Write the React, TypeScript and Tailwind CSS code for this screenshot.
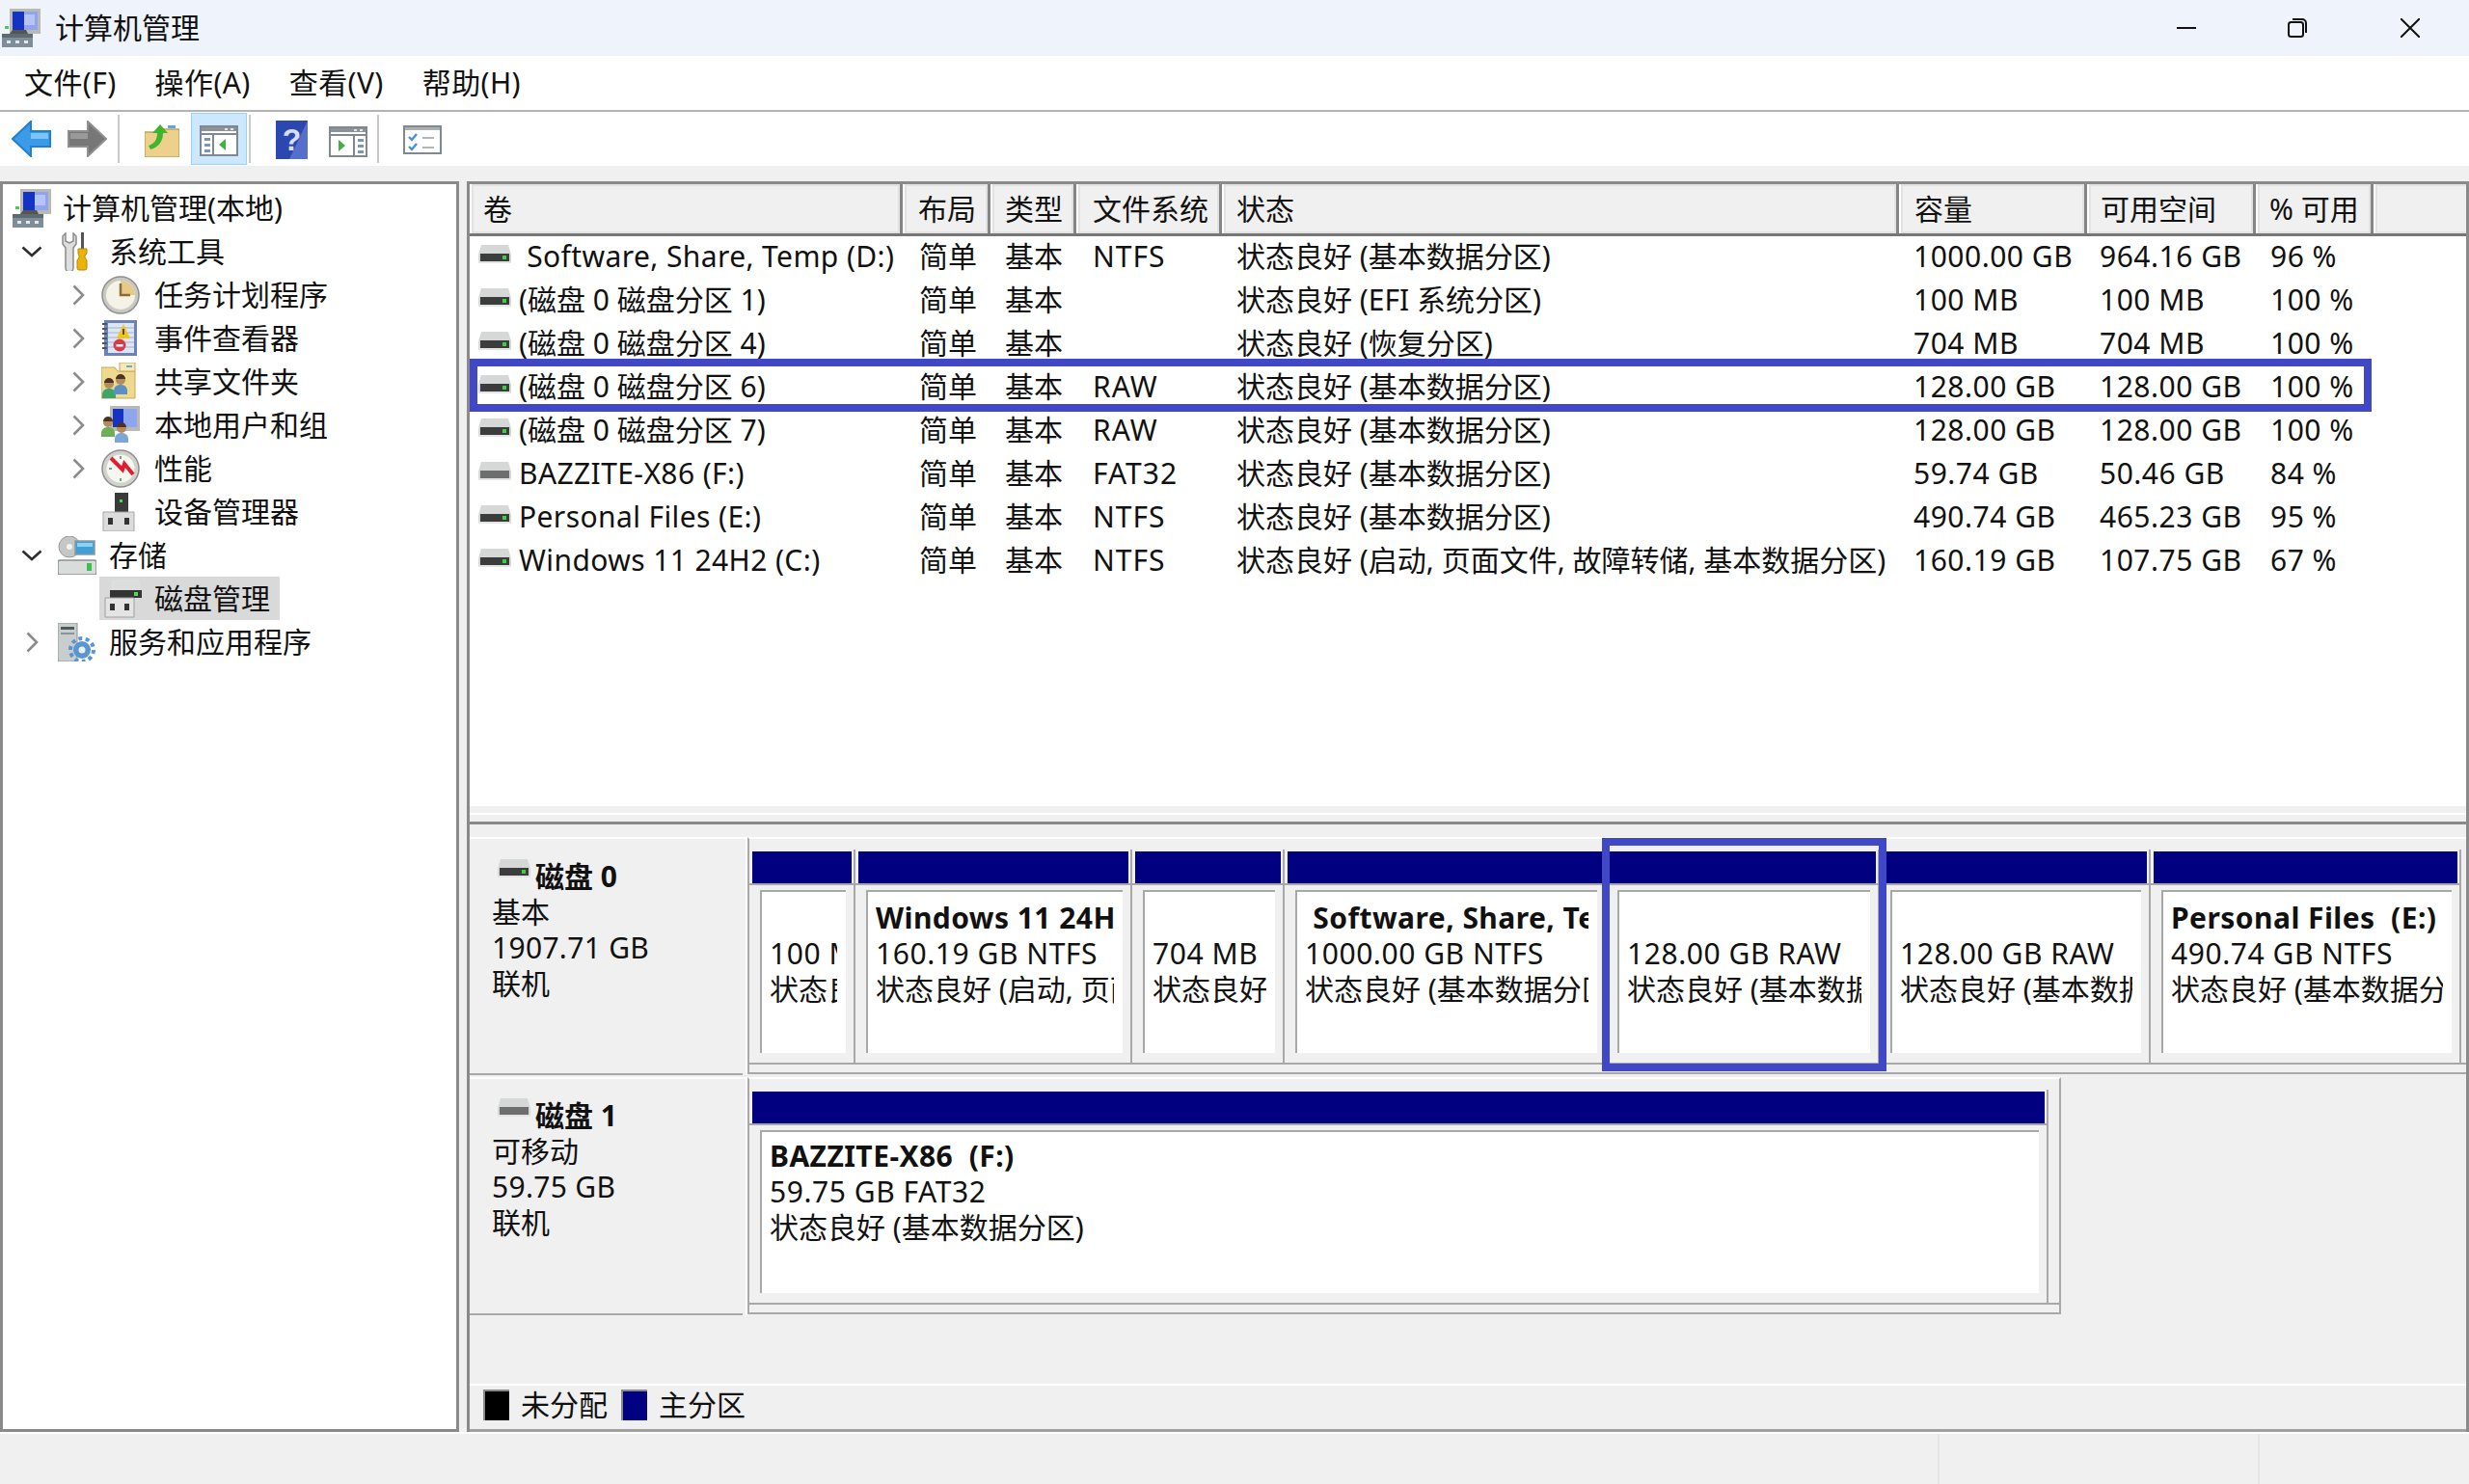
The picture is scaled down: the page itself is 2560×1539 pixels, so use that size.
import React from 'react';

const columns = [
  { title: '卷', w: 'w-[449px]', pl: 'pl-[12px]', cell: '' },
  { title: '布局', w: 'w-[91px]', pl: 'pl-[14px]', cell: 'pl-[17px]' },
  { title: '类型', w: 'w-[89px]', pl: 'pl-[13px]', cell: 'pl-[15px]' },
  { title: '文件系统', w: 'w-[151px]', pl: 'pl-[15px]', cell: 'pl-[17px] tracking-[1px]' },
  { title: '状态', w: 'w-[702px]', pl: 'pl-[13px]', cell: 'pl-[15px]' },
  { title: '容量', w: 'w-[195px]', pl: 'pl-[14px]', cell: 'pl-[15px] tracking-[0.5px]' },
  { title: '可用空间', w: 'w-[175px]', pl: 'pl-[12px]', cell: 'pl-[13px] tracking-[0.5px]' },
  { title: '% 可用', w: 'w-[122px]', pl: 'pl-[12px]', cell: 'pl-[15px] tracking-[0.5px]' },
  { title: '', w: 'flex-1', pl: '', cell: '' },
];

const volumes = [
  [' Software, Share, Temp (D:)', '简单', '基本', 'NTFS', '状态良好 (基本数据分区)', '1000.00 GB', '964.16 GB', '96 %'],
  ['(磁盘 0 磁盘分区 1)', '简单', '基本', '', '状态良好 (EFI 系统分区)', '100 MB', '100 MB', '100 %'],
  ['(磁盘 0 磁盘分区 4)', '简单', '基本', '', '状态良好 (恢复分区)', '704 MB', '704 MB', '100 %'],
  ['(磁盘 0 磁盘分区 6)', '简单', '基本', 'RAW', '状态良好 (基本数据分区)', '128.00 GB', '128.00 GB', '100 %'],
  ['(磁盘 0 磁盘分区 7)', '简单', '基本', 'RAW', '状态良好 (基本数据分区)', '128.00 GB', '128.00 GB', '100 %'],
  ['BAZZITE-X86 (F:)', '简单', '基本', 'FAT32', '状态良好 (基本数据分区)', '59.74 GB', '50.46 GB', '84 %'],
  ['Personal Files (E:)', '简单', '基本', 'NTFS', '状态良好 (基本数据分区)', '490.74 GB', '465.23 GB', '95 %'],
  ['Windows 11 24H2 (C:)', '简单', '基本', 'NTFS', '状态良好 (启动, 页面文件, 故障转储, 基本数据分区)', '160.19 GB', '107.75 GB', '67 %'],
];

const disk0Parts = [
  { w: 'w-[110px]', title: '', size: '100 MB', status: '状态良好 (EFI 系统分区)' },
  { w: 'w-[287px]', title: 'Windows 11 24H2  (C:)', size: '160.19 GB NTFS', status: '状态良好 (启动, 页面文件, 故障转储, 基本数据分区)' },
  { w: 'w-[158px]', title: '', size: '704 MB', status: '状态良好 (恢复分区)' },
  { w: 'w-[334px]', title: ' Software, Share, Temp  (D:)', size: '1000.00 GB NTFS', status: '状态良好 (基本数据分区)' },
  { w: 'w-[283px]', title: '', size: '128.00 GB RAW', status: '状态良好 (基本数据分区)' },
  { w: 'w-[281px]', title: '', size: '128.00 GB RAW', status: '状态良好 (基本数据分区)' },
  { w: 'w-[322px]', title: 'Personal Files  (E:)', size: '490.74 GB NTFS', status: '状态良好 (基本数据分区)' },
];

const DiskIcon = ({ removable = false, className = '' }: { removable?: boolean; className?: string }) => (
  <svg viewBox="0 0 34 20" className={`w-[34px] h-[20px] shrink-0 ${className}`}>
    <path d="M3 0H31L34 10V19H0V10Z" fill="#d6d8d8" />
    <rect x="2" y="9" width="30" height="8" fill={removable ? '#6e6e6e' : '#3c3c3c'} />
    {!removable && <rect x="25" y="11" width="4" height="4" fill="#35d43a" />}
    <rect x="0" y="17" width="34" height="2" fill="#e4e4e4" />
  </svg>
);

const ComputerIcon = ({ className = '' }: { className?: string }) => (
  <svg viewBox="0 0 40 40" className={`w-[40px] h-[40px] shrink-0 ${className}`}>
    <rect x="8" y="0" width="32" height="26" fill="#b9bab5" />
    <rect x="11" y="3" width="26" height="19" fill="#8fa6ee" />
    <rect x="11" y="3" width="12" height="19" fill="#1432c4" />
    <rect x="23" y="6" width="11" height="11" fill="#b5c4f4" />
    <path d="M11 22h14l2 4H8Z" fill="#555" />
    <path d="M0 26h32v14H0Z" fill="#7e8e99" />
    <rect x="0" y="26" width="32" height="4" fill="#5e6a72" />
    <rect x="5" y="33" width="4" height="3" fill="#e6e6e6" />
    <rect x="14" y="33" width="4" height="3" fill="#e6e6e6" />
    <rect x="23" y="33" width="4" height="3" fill="#e6e6e6" />
    <rect x="3" y="18" width="4" height="3" fill="#4bcf4b" />
  </svg>
);

const ToolsIcon = () => (
  <svg viewBox="0 0 40 40" className="w-[40px] h-[40px] shrink-0">
    <path d="M8 1v8l4 2 4-2V1l3 3v8l-3 4v21a3 3 0 0 1-8 0V16l-3-4V4Z" fill="#dedede" stroke="#8b8b8b" strokeWidth="1.5" />
    <rect x="24" y="0" width="3" height="17" fill="#555" />
    <path d="M21 17h9v5l-2 2v2l2 3v8a2 2 0 0 1-2 2h-6a2 2 0 0 1-2-2v-8l2-3v-2l-1-2Z" fill="#eab308" stroke="#b98508" strokeWidth="1" />
  </svg>
);

const ClockIcon = () => (
  <svg viewBox="0 0 40 40" className="w-[40px] h-[40px] shrink-0">
    <circle cx="20" cy="20" r="19" fill="#c9c9c4" stroke="#8e8e8e" strokeWidth="1.5" />
    <circle cx="20" cy="20" r="15" fill="#f5f2e6" />
    <path d="M20 5A15 15 0 0 1 35 20H20Z" fill="#e8c98a" />
    <path d="M20 8v12h10" fill="none" stroke="#8a6d35" strokeWidth="2.5" />
  </svg>
);

const EventIcon = () => (
  <svg viewBox="0 0 40 40" className="w-[40px] h-[40px] shrink-0">
    <rect x="3" y="1" width="34" height="37" fill="#6a82b8" />
    <rect x="7" y="4" width="27" height="31" fill="#dfe6f3" />
    <path d="M7 9h27M7 14h27M7 19h27M7 24h27M7 29h27" stroke="#b5c3dd" strokeWidth="1.5" />
    <path d="M1 5h5M1 10h5M1 15h5M1 20h5M1 25h5M1 30h5" stroke="#555" strokeWidth="2" />
    <path d="M23 5l7 15H16Z" fill="#f0c419" />
    <rect x="22" y="10" width="2" height="6" fill="#5a4500" />
    <circle cx="19" cy="27" r="6.5" fill="#d83a4a" />
    <rect x="15.5" y="26" width="7" height="2.5" fill="#fff" />
  </svg>
);

const Person = ({ x, y, color }: { x: number; y: number; color: string }) => (
  <g transform={`translate(${x} ${y})`}>
    <circle cx="7" cy="5" r="5" fill="#b58a5e" />
    <path d="M2 4a5 5 0 0 1 10 0Z" fill="#4a3525" />
    <path d="M0 20v-4a6 6 0 0 1 6-6h2a6 6 0 0 1 6 6v4Z" fill={color} />
  </g>
);

const SharedIcon = () => (
  <svg viewBox="0 0 40 40" className="w-[40px] h-[40px] shrink-0">
    <path d="M0 5h14l3 4h18v28H0Z" fill="#efd98f" stroke="#c6a85a" strokeWidth="1" />
    <path d="M19 0h16v9H19Z" fill="#f6e9b8" stroke="#c6a85a" strokeWidth="1" />
    <rect x="26" y="3" width="6" height="2" fill="#6aa5e0" />
    <Person x={1} y={17} color="#3fa46a" />
    <Person x={13} y={13} color="#5b8fc7" />
  </svg>
);

const UsersIcon = () => (
  <svg viewBox="0 0 40 40" className="w-[40px] h-[40px] shrink-0">
    <rect x="9" y="0" width="31" height="26" fill="#b9bab5" />
    <rect x="12" y="3" width="25" height="19" fill="#8fa6ee" />
    <rect x="12" y="3" width="11" height="19" fill="#1432c4" />
    <Person x={0} y={12} color="#6fae58" />
    <Person x={14} y={18} color="#7ba6d8" />
  </svg>
);

const PerfIcon = () => (
  <svg viewBox="0 0 40 40" className="w-[40px] h-[40px] shrink-0">
    <circle cx="20" cy="20" r="19" fill="#d2d2cc" stroke="#8e8e8e" strokeWidth="1.5" />
    <circle cx="20" cy="20" r="14.5" fill="#f7f7f2" />
    <path d="M10 9l12 12 2-6 9 11" fill="none" stroke="#e11d2e" strokeWidth="4" />
    <path d="M8 20h3M20 7v3M20 30v3" stroke="#7aa27a" strokeWidth="2" />
  </svg>
);

const DeviceIcon = () => (
  <svg viewBox="0 0 40 40" className="w-[40px] h-[40px] shrink-0">
    <rect x="14" y="0" width="14" height="20" fill="#3a3a3a" />
    <rect x="19" y="7" width="3" height="3" fill="#46e04a" />
    <path d="M2 20h32v20H2Z" fill="#dcdcdc" stroke="#a5a5a5" strokeWidth="1" />
    <rect x="7" y="26" width="5" height="7" fill="#333" />
    <rect x="24" y="26" width="5" height="7" fill="#333" />
  </svg>
);

const StorageIcon = () => (
  <svg viewBox="0 0 40 40" className="w-[40px] h-[40px] shrink-0">
    <circle cx="12" cy="11" r="11" fill="#c4c7c6" stroke="#999" strokeWidth="1" />
    <circle cx="12" cy="11" r="3" fill="#f2f2f2" />
    <rect x="18" y="5" width="20" height="14" fill="#3f9fd6" stroke="#8a9aa3" strokeWidth="1.5" />
    <rect x="20" y="7" width="16" height="4" fill="#8fd0ef" />
    <rect x="0" y="25" width="40" height="15" rx="2" fill="#d8dcda" stroke="#8c8f8e" strokeWidth="1.5" />
    <rect x="30" y="28" width="5" height="8" fill="#3cc04a" />
  </svg>
);

const MgmtDiskIcon = () => (
  <svg viewBox="0 0 40 40" className="w-[40px] h-[40px] shrink-0">
    <path d="M8 0H36L38 11H6Z" fill="#dcdedd" />
    <rect x="6" y="11" width="33" height="8" fill="#333" />
    <rect x="31" y="13" width="4" height="4" fill="#46e04a" />
    <path d="M1 19h30v20H1Z" fill="#e4e4e4" stroke="#a0a0a0" strokeWidth="1" />
    <rect x="6" y="25" width="5" height="7" fill="#333" />
    <rect x="21" y="25" width="5" height="7" fill="#333" />
  </svg>
);

const ServicesIcon = () => (
  <svg viewBox="0 0 40 40" className="w-[40px] h-[40px] shrink-0">
    <rect x="0" y="0" width="20" height="40" fill="#c9cdce" stroke="#8e9496" strokeWidth="1" />
    <rect x="3" y="4" width="14" height="3" fill="#4d5a62" />
    <rect x="3" y="10" width="14" height="2" fill="#88959b" />
    <circle cx="25" cy="28" r="9" fill="#5b95cf" />
    <circle cx="25" cy="28" r="12" fill="none" stroke="#5b95cf" strokeWidth="4" strokeDasharray="4 3.5" />
    <circle cx="25" cy="28" r="3.5" fill="#e5f0fa" />
  </svg>
);

const PaneIcon = ({ flip = false }: { flip?: boolean }) => (
  <svg viewBox="0 0 40 32" className="w-[40px] h-[32px]">
    <rect x="1" y="1" width="38" height="30" fill="#fff" stroke="#808890" strokeWidth="2" />
    <rect x="2" y="2" width="36" height="4" fill="#8a929a" />
    <rect x="26" y="3" width="3" height="2" fill="#e6e6e6" />
    <rect x="32" y="3" width="3" height="2" fill="#e6e6e6" />
    <path d="M2 9h36" stroke="#808890" strokeWidth="2" />
    <path d={flip ? 'M26 10v21' : 'M14 10v21'} stroke="#808890" strokeWidth="2" />
    <g fill="#7f95b8">
      <rect x={flip ? 30 : 5} y="13" width="6" height="3" />
      <rect x={flip ? 30 : 5} y="19" width="6" height="3" />
      <rect x={flip ? 30 : 5} y="25" width="6" height="3" />
    </g>
    <path d={flip ? 'M10 14l7 6-7 6Z' : 'M27 14l-7 6 7 6Z'} fill="#3fb13f" />
  </svg>
);

const ToolSep = () => <div className="w-[2px] h-[50px] bg-[#c9c9c9] shrink-0" />;

const Chevron = ({ open = false, root = false }: { open?: boolean; root?: boolean }) =>
  open ? (
    <svg viewBox="0 0 22 12" className="w-[22px] h-[12px]">
      <path d="M1.5 1.5L11 10l9.5-8.5" fill="none" stroke="#2e2e2e" strokeWidth="2.6" />
    </svg>
  ) : (
    <svg viewBox="0 0 13 22" className={`w-[13px] h-[22px] ${root ? 'ml-[5px]' : ''}`}>
      <path d="M1.5 1.5L11 11l-9.5 9.5" fill="none" stroke="#8b8b8b" strokeWidth="2.6" />
    </svg>
  );

const level2 = [
  { label: '任务计划程序', icon: <ClockIcon />, chevron: true },
  { label: '事件查看器', icon: <EventIcon />, chevron: true },
  { label: '共享文件夹', icon: <SharedIcon />, chevron: true },
  { label: '本地用户和组', icon: <UsersIcon />, chevron: true },
  { label: '性能', icon: <PerfIcon />, chevron: true },
  { label: '设备管理器', icon: <DeviceIcon />, chevron: false },
];

const Level1 = ({ label, icon, open }: { label: string; icon: React.ReactNode; open: boolean }) => (
  <div className="h-[45px] flex items-center pl-[19px]">
    <div className="w-[38px] shrink-0 flex items-center">
      <Chevron open={open} root={!open} />
    </div>
    {icon}
    <span className="ml-[13px]">{label}</span>
  </div>
);

type PartitionProps = { w: string; title: string; size: string; status: string; tight?: boolean };

const Partition = ({ w, title, size, status, tight }: PartitionProps) => (
  <div className={`${w} shrink-0 border-r-2 border-r-[#a8a8a8] pt-[2px] flex flex-col`}>
    <div className="h-[33px] ml-[3px] mr-[2px] bg-[#000080] shrink-0" />
    <div className="h-[2px] bg-[#a8a8a8] shrink-0" />
    <div className={`ml-[11px] mr-[8px] mt-[5px] h-[169px] bg-white border-t-2 border-l-2 border-[#a8a8a8] pl-[8px] pr-[9px] ${tight ? 'pt-[6px]' : 'pt-[8px]'}`}>
      <div className="overflow-hidden leading-[37px] whitespace-pre">
        <div className="h-[37px] font-bold tracking-[0.45px]">{title}</div>
        <div className="h-[37px] tracking-[0.55px]">{size}</div>
        <div className="h-[38px]">{status}</div>
      </div>
    </div>
    <div className="h-[10px] shrink-0" />
  </div>
);

type DiskRowProps = { name: string; kind: string; size: string; removable?: boolean; narrow?: boolean; children: React.ReactNode };

const DiskRow = ({ name, kind, size, removable, children, narrow }: DiskRowProps) => (
  <div className="flex h-[249px] shrink-0">
    <div className={`w-[283px] h-[247px] shrink-0 border-t-2 border-t-white border-b-2 border-b-[#a8a8a8] pl-[23px] ${narrow ? 'pt-[18px]' : 'pt-[19px]'} leading-[37px]`}>
      <div className="flex items-start h-[38px] font-bold">
        <DiskIcon removable={removable} className="ml-[6px] mt-[2px]" />
        <span className="ml-[5px] mt-[1px]">{name}</span>
      </div>
      <div>{kind}</div>
      <div className="tracking-[0.3px]">{size}</div>
      <div>联机</div>
    </div>
    <div className="w-[5px] shrink-0 h-[247px] border-t-2 border-t-white border-r-2 border-r-white" />
    <div className={`${narrow ? 'w-[1362px] border-r-2 border-r-[#a8a8a8]' : 'flex-1'} h-[246px] border-l-2 border-l-[#a8a8a8] border-t-2 border-t-white border-b-2 border-b-[#a8a8a8] pt-[11px] pb-[8px]`}>
      <div className="flex h-full border-b-2 border-b-[#a8a8a8]">{children}</div>
    </div>
  </div>
);

export default function App() {
  return (
    <div className="w-[2560px] h-[1539px] flex flex-col overflow-hidden bg-[#f0f0f0] text-[30px] leading-none text-[#111] font-['Noto_Sans','Noto_Sans_CJK_SC',sans-serif]">
      {/* title bar */}
      <div className="h-[58px] shrink-0 bg-[#eff3fb] flex items-center pl-[2px]">
        <ComputerIcon />
        <span className="ml-[15px]">计算机管理</span>
        <div className="ml-auto flex items-center">
          <svg viewBox="0 0 20 20" className="w-[20px] h-[20px] mr-[95px]"><path d="M0 10h20" stroke="#111" strokeWidth="2" /></svg>
          <svg viewBox="0 0 20 20" className="w-[20px] h-[20px] mr-[97px]"><rect x="1" y="4" width="15" height="15" rx="2.5" fill="none" stroke="#111" strokeWidth="2" /><path d="M5 1h10a4 4 0 0 1 4 4v10" fill="none" stroke="#111" strokeWidth="2" /></svg>
          <svg viewBox="0 0 20 20" className="w-[20px] h-[20px] mr-[51px]"><path d="M0 0l20 20M20 0L0 20" stroke="#111" strokeWidth="2" /></svg>
        </div>
      </div>
      {/* menu */}
      <div className="h-[58px] shrink-0 bg-white border-b-2 border-b-[#b4b4b4] flex items-center pl-[25px] gap-[40px] tracking-[0.4px]">
        <span>文件(F)</span>
        <span>操作(A)</span>
        <span>查看(V)</span>
        <span>帮助(H)</span>
      </div>
      {/* toolbar */}
      <div className="h-[56px] shrink-0 bg-white flex items-center pl-[12px]">
        <svg viewBox="0 0 41 38" className="w-[41px] h-[38px]">
          <path d="M1 19L20 1v10h20v16H20v10Z" fill="#3c9be8" stroke="#1f7fd0" strokeWidth="2" />
          <path d="M20 13h18v6H20Z" fill="#7cc4f6" />
        </svg>
        <svg viewBox="0 0 41 38" className="w-[41px] h-[38px] ml-[17px]">
          <path d="M40 19L21 1v10H1v16h20v10Z" fill="#777" stroke="#8f8f8f" strokeWidth="2" />
          <path d="M3 13h18v6H3Z" fill="#9a9a9a" />
        </svg>
        <div className="ml-[11px]"><ToolSep /></div>
        <svg viewBox="0 0 36 36" className="w-[36px] h-[36px] ml-[26px] mt-[2px]">
          <path d="M0 10h12l3-3h21v29H0Z" fill="#ecd08c" stroke="#c2a25a" strokeWidth="1.5" />
          <rect x="24" y="3" width="8" height="3" fill="#5fa6e0" />
          <path d="M4 24c6-2 9-6 9-13H8l8-9 8 9h-5c0 9-5 15-13 17Z" fill="#3fb52f" />
        </svg>
        <div className="ml-[12px] w-[58px] h-[54px] shrink-0 bg-[#cce8ff] border border-[#99d1ff] flex items-center justify-center pt-[4px]">
          <PaneIcon />
        </div>
        <div className="ml-[2px]"><ToolSep /></div>
        <svg viewBox="0 0 33 40" className="w-[33px] h-[40px] ml-[26px] mt-[2px]">
          <rect x="0" y="0" width="33" height="40" fill="#2a48b0" />
          <path d="M33 0v40H14Z" fill="#5470cc" />
          <text x="16.5" y="31" textAnchor="middle" fontSize="32" fontWeight="700" fill="#d8def0" fontFamily="Liberation Sans, sans-serif">?</text>
        </svg>
        <div className="ml-[22px] pt-[5px]"><PaneIcon flip /></div>
        <div className="ml-[10px]"><ToolSep /></div>
        <svg viewBox="0 0 40 30" className="w-[40px] h-[30px] ml-[25px] mt-[2px]">
          <rect x="1" y="1" width="38" height="28" fill="#fff" stroke="#808890" strokeWidth="2" />
          <rect x="2" y="2" width="36" height="3" fill="#a9afb5" />
          <path d="M6 12l3 3 5-6M6 22l3 3 5-6" fill="none" stroke="#4a90d9" strokeWidth="2.4" />
          <path d="M20 13h12M20 23h12" stroke="#b5b5b5" strokeWidth="2" />
        </svg>
      </div>
      <div className="h-[16px] shrink-0" />

      {/* main */}
      <div className="h-[1297px] shrink-0 flex">
        {/* tree */}
        <div className="w-[476px] shrink-0 bg-white border-[3px] border-[#8a8a8a] pt-[2px]">
          <div className="h-[45px] flex items-center pl-[10px]">
            <ComputerIcon />
            <span className="ml-[12px]">计算机管理(本地)</span>
          </div>
          <Level1 label="系统工具" icon={<ToolsIcon />} open />
          {level2.map((item) => (
            <div key={item.label} className="h-[45px] flex items-center pl-[72px]">
              <div className="w-[30px] shrink-0 flex items-center">{item.chevron && <Chevron />}</div>
              {item.icon}
              <span className="ml-[15px]">{item.label}</span>
            </div>
          ))}
          <Level1 label="存储" icon={<StorageIcon />} open />
          <div className="h-[45px] pl-[100px] flex items-center">
            <div className="h-[45px] w-[187px] bg-[#d9d9d9] flex items-center pl-[5px]">
              <MgmtDiskIcon />
              <span className="ml-[12px]">磁盘管理</span>
            </div>
          </div>
          <Level1 label="服务和应用程序" icon={<ServicesIcon />} open={false} />
        </div>

        <div className="w-[8px] shrink-0" />

        {/* right pane */}
        <div className="flex-1 relative flex flex-col border-l-[3px] border-t-[3px] border-r-[3px] border-[#8a8a8a]">
          <div className="h-[645px] shrink-0 bg-white flex flex-col">
            <div className="h-[54px] shrink-0 flex border-b-[3px] border-b-[#777]">
              {columns.map((c) => (
                <div key={c.title || 'end'} className={`${c.w} ${c.title ? 'border-r-[3px] border-r-[#858585] shadow-[inset_2px_2px_0_#e2e2e2,inset_-2px_-2px_0_#e2e2e2]' : 'shadow-[inset_2px_2px_0_#e2e2e2,inset_0_-2px_0_#e2e2e2]'} ${c.pl} shrink-0 bg-[#f0f0f0] border-l-2 border-l-white flex items-center`}>
                  {c.title}
                </div>
              ))}
            </div>
            {volumes.map((row, i) => (
              <div key={i} className="h-[45px] shrink-0 flex items-center whitespace-pre pb-[3px]">
                {row.map((cell, j) =>
                  j === 0 ? (
                    <div key={j} className={`${columns[0].w} shrink-0 flex items-center pl-[9px]`}>
                      <DiskIcon removable={cell.startsWith('BAZZITE')} className="mb-[4px]" />
                      <span className={`ml-[8px] ${cell.startsWith('(') ? '' : 'tracking-[0.4px]'}`}>{cell}</span>
                    </div>
                  ) : (
                    <div key={j} className={`${columns[j].w} shrink-0 ${columns[j].cell}`}>{cell}</div>
                  ),
                )}
              </div>
            ))}
          </div>

          {/* splitter */}
          <div className="h-[19px] shrink-0 bg-[#f0f0f0] border-b-[3px] border-b-[#8a8a8a]">
            <div className="mt-[7px] h-[2px] bg-white" />
          </div>
          <div className="h-[13px] shrink-0" />

          {/* disks */}
          <DiskRow name="磁盘 0" kind="基本" size="1907.71 GB">
            {disk0Parts.map((p, i) => (
              <Partition key={i} {...p} />
            ))}
          </DiskRow>
          <DiskRow name="磁盘 1" kind="可移动" size="59.75 GB" removable narrow>
            <Partition w="w-[1347px]" title="BAZZITE-X86  (F:)" size="59.75 GB FAT32" status="状态良好 (基本数据分区)" tight />
          </DiskRow>
          <div className="flex-1" />

          {/* legend */}
          <div className="h-[50px] shrink-0 border-t-2 border-t-white border-b-[3px] border-b-[#a0a0a0] flex items-center pl-[14px] pb-[6px]">
            <div className="w-[27px] h-[32px] bg-black border-t-2 border-l-2 border-[#8a8a8a]" />
            <span className="ml-[12px]">未分配</span>
            <div className="ml-[14px] w-[27px] h-[32px] bg-[#000080] border-t-2 border-l-2 border-[#8a8a8a]" />
            <span className="ml-[12px]">主分区</span>
          </div>

          {/* annotation rectangles */}
          <div className="absolute left-0 top-[181px] w-[1972px] h-[55px] border-[8px] border-[#4048c8]" />
          <div className="absolute left-[1174px] top-[678px] w-[295px] h-[242px] border-[8px] border-[#4048c8]" />
        </div>
      </div>

      {/* status bar */}
      <div className="flex-1 border-t-2 border-t-white flex">
        <div className="w-[2011px] border-r-2 border-r-[#e6e6e6]" />
        <div className="w-[332px] border-r-2 border-r-[#e6e6e6]" />
      </div>
    </div>
  );
}
